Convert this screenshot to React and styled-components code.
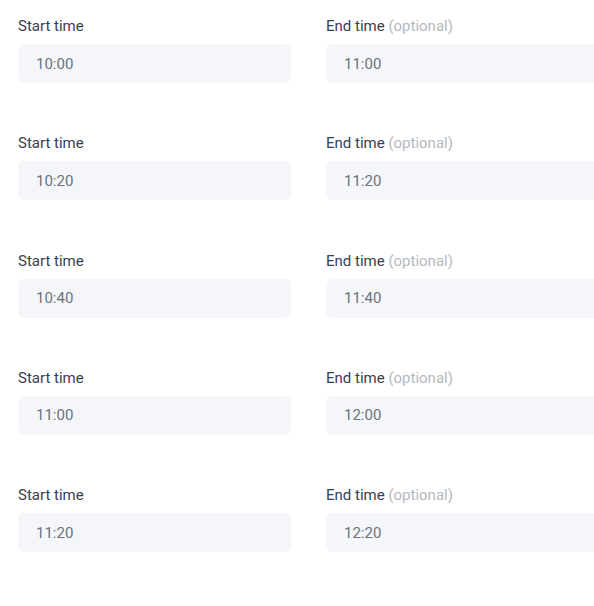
import React from "react";
import styled, { createGlobalStyle } from "styled-components";

const GlobalStyle = createGlobalStyle`
  html, body {
    margin: 0;
    padding: 0;
    background: #ffffff;
    overflow: hidden;
  }
  body {
    font-family: Roboto, "Liberation Sans", sans-serif;
  }
`;

const Page = styled.div`
  width: 620px;
  padding: 15px 0 0 18px;
  display: flex;
  flex-direction: column;
  gap: 49.25px;
`;

const Row = styled.div`
  display: grid;
  grid-template-columns: 273px 273px;
  column-gap: 35px;
`;

const Field = styled.div`
  display: flex;
  flex-direction: column;
  gap: 7px;
`;

const Label = styled.label`
  font-size: 15px;
  line-height: 22px;
  color: #374151;
`;

const Hint = styled.span`
  color: #b4b9c0;
`;

const Input = styled.div`
  height: 39px;
  box-sizing: border-box;
  padding: 0 18px;
  display: flex;
  align-items: center;
  background: #f5f6f9;
  border-radius: 6px;
  font-size: 15px;
  color: #6b7280;
`;

const rows = [
  ["10:00", "11:00"],
  ["10:20", "11:20"],
  ["10:40", "11:40"],
  ["11:00", "12:00"],
  ["11:20", "12:20"],
];

export default function App() {
  return (
    <>
      <GlobalStyle />
      <Page>
        {rows.map(([start, end]) => (
          <Row key={start}>
            <Field>
              <Label>Start time</Label>
              <Input>{start}</Input>
            </Field>
            <Field>
              <Label>
                End time <Hint>(optional)</Hint>
              </Label>
              <Input>{end}</Input>
            </Field>
          </Row>
        ))}
      </Page>
    </>
  );
}
